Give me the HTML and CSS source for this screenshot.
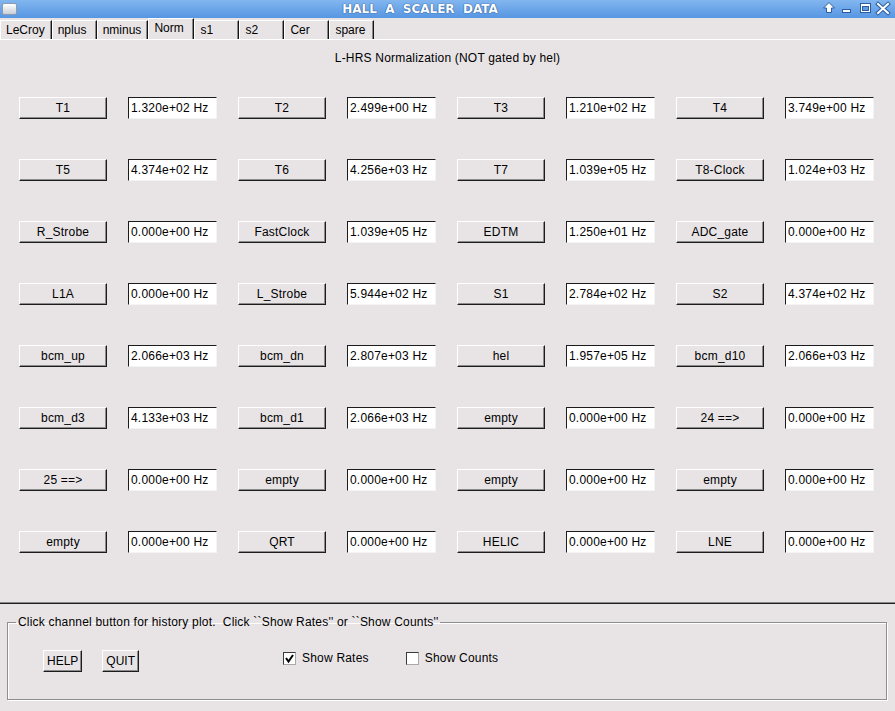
FILE: index.html
```html
<!DOCTYPE html>
<html>
<head>
<meta charset="utf-8">
<title>HALL A SCALER DATA</title>
<link rel="stylesheet" href="styles.css">
</head>
<body>
<div class="titlebar">
  <span class="app-icon"></span>
  <span class="title">HALL  A  SCALER  DATA</span>
  <svg class="wm" width="75" height="18" viewBox="0 0 75 18">
    <polygon points="9,2.5 14.5,8 11.5,8 11.5,12.5 6.5,12.5 6.5,8 3.5,8" fill="#fff" stroke="#2a5d9e" stroke-width="1"/>
    <rect x="22.5" y="9.5" width="8" height="3" fill="#fff" stroke="#2a5d9e" stroke-width="1"/>
    <rect x="40.5" y="3.5" width="10" height="9" fill="#fff" stroke="#2a5d9e" stroke-width="1"/>
    <rect x="42.5" y="6.5" width="6" height="4" fill="#5d9ae2" stroke="#2a5d9e" stroke-width="1"/>
    <path d="M58 4 L68 13 M68 4 L58 13" stroke="#2a5d9e" stroke-width="4" stroke-linecap="square"/>
    <path d="M58 4 L68 13 M68 4 L58 13" stroke="#fff" stroke-width="2" stroke-linecap="square"/>
  </svg>
</div>
<div class="tabs">
  <div class="tab">LeCroy</div>
  <div class="tab">nplus</div>
  <div class="tab">nminus</div>
  <div class="tab active">Norm</div>
  <div class="tab">s1</div>
  <div class="tab">s2</div>
  <div class="tab">Cer</div>
  <div class="tab">spare</div>
</div>
<div class="panel">
  <div class="heading">L-HRS Normalization (NOT gated by hel)</div>
  <div class="grid">
    <button class="chan">T1</button><div class="rate">1.320e+02 Hz</div>
    <button class="chan">T2</button><div class="rate">2.499e+00 Hz</div>
    <button class="chan">T3</button><div class="rate">1.210e+02 Hz</div>
    <button class="chan">T4</button><div class="rate">3.749e+00 Hz</div>

    <button class="chan">T5</button><div class="rate">4.374e+02 Hz</div>
    <button class="chan">T6</button><div class="rate">4.256e+03 Hz</div>
    <button class="chan">T7</button><div class="rate">1.039e+05 Hz</div>
    <button class="chan">T8-Clock</button><div class="rate">1.024e+03 Hz</div>

    <button class="chan">R_Strobe</button><div class="rate">0.000e+00 Hz</div>
    <button class="chan">FastClock</button><div class="rate">1.039e+05 Hz</div>
    <button class="chan">EDTM</button><div class="rate">1.250e+01 Hz</div>
    <button class="chan">ADC_gate</button><div class="rate">0.000e+00 Hz</div>

    <button class="chan">L1A</button><div class="rate">0.000e+00 Hz</div>
    <button class="chan">L_Strobe</button><div class="rate">5.944e+02 Hz</div>
    <button class="chan">S1</button><div class="rate">2.784e+02 Hz</div>
    <button class="chan">S2</button><div class="rate">4.374e+02 Hz</div>

    <button class="chan">bcm_up</button><div class="rate">2.066e+03 Hz</div>
    <button class="chan">bcm_dn</button><div class="rate">2.807e+03 Hz</div>
    <button class="chan">hel</button><div class="rate">1.957e+05 Hz</div>
    <button class="chan">bcm_d10</button><div class="rate">2.066e+03 Hz</div>

    <button class="chan">bcm_d3</button><div class="rate">4.133e+03 Hz</div>
    <button class="chan">bcm_d1</button><div class="rate">2.066e+03 Hz</div>
    <button class="chan">empty</button><div class="rate">0.000e+00 Hz</div>
    <button class="chan">24 ==&gt;</button><div class="rate">0.000e+00 Hz</div>

    <button class="chan">25 ==&gt;</button><div class="rate">0.000e+00 Hz</div>
    <button class="chan">empty</button><div class="rate">0.000e+00 Hz</div>
    <button class="chan">empty</button><div class="rate">0.000e+00 Hz</div>
    <button class="chan">empty</button><div class="rate">0.000e+00 Hz</div>

    <button class="chan">empty</button><div class="rate">0.000e+00 Hz</div>
    <button class="chan">QRT</button><div class="rate">0.000e+00 Hz</div>
    <button class="chan">HELIC</button><div class="rate">0.000e+00 Hz</div>
    <button class="chan">LNE</button><div class="rate">0.000e+00 Hz</div>
  </div>
</div>
<div class="bottom">
  <fieldset class="group">
    <legend>Click channel button for history plot.  Click ``Show Rates'' or ``Show Counts''</legend>
    <div class="controls">
      <button class="btn">HELP</button>
      <button class="btn quit">QUIT</button>
      <label class="check rates"><span class="box"><svg width="11" height="11" viewBox="0 0 11 11"><path d="M2 5 L4.5 8.5 L9 2" fill="none" stroke="#000" stroke-width="2"/></svg></span>Show Rates</label>
      <label class="check counts"><span class="box"></span>Show Counts</label>
    </div>
  </fieldset>
</div>
</body>
</html>
```
FILE: styles.css
```css
html, body {
  margin: 0;
  padding: 0;
}
body {
  width: 895px;
  height: 711px;
  overflow: hidden;
  background: #e8e4e6;
  font-family: "Liberation Sans", Arial, sans-serif;
  font-size: 12px;
  letter-spacing: 0.2px;
  color: #000;
}

/* title bar */
.titlebar {
  display: flex;
  align-items: center;
  height: 18px;
  background: linear-gradient(#82b6ef, #5696e2);
}
.app-icon {
  box-sizing: border-box;
  width: 15px;
  height: 12px;
  margin-left: 2px;
  margin-right: 3px;
  border: 1px solid #8b9cb2;
  border-radius: 2px;
  background: linear-gradient(#ffffff, #c9ced6);
}
.title {
  flex: 1;
  text-align: center;
  white-space: pre;
  font-family: "DejaVu Sans", sans-serif;
  font-weight: bold;
  font-size: 12px;
  letter-spacing: 0;
  line-height: 18px;
  color: #fff;
  text-shadow: 0 0 1px #1d4a88, 0 0 1px #1d4a88;
}
.wm {
  display: block;
}

/* tabs */
.tabs {
  display: flex;
  align-items: flex-end;
  height: 21px;
  letter-spacing: 0;
}
.tab {
  box-sizing: border-box;
  height: 19px;
  min-width: 45px;
  padding: 0 6px 0 5px;
  border-left: 1px solid #fff;
  border-top: 1px solid #fff;
  border-right: 1px solid #151515;
  box-shadow: inset -1px 0 0 #8a8a8a;
  line-height: 18px;
}
.tab.active {
  height: 21px;
  line-height: 19px;
  min-width: 46px;
}

/* main panel */
.panel {
  box-sizing: border-box;
  height: 564px;
  border-top: 1px solid #fff;
  border-bottom: 1px solid #8a8a8a;
}
.heading {
  margin-top: 11px;
  height: 14px;
  line-height: 14px;
  text-align: center;
}
.grid {
  display: grid;
  grid-template-columns: 88px 89px 88px 89px 88px 89px 88px 89px;
  grid-auto-rows: 22px;
  column-gap: 21px;
  row-gap: 40px;
  margin: 32px 0 0 19px;
}
.chan, .btn {
  box-sizing: border-box;
  height: 22px;
  margin: 0;
  padding: 0;
  font: inherit;
  letter-spacing: inherit;
  color: #000;
  background: #e8e4e6;
  border: 1px solid;
  border-color: #fff #1c1c1c #1c1c1c #fff;
  box-shadow: inset -1px -1px 0 #8c8c8c;
  line-height: 20px;
  text-align: center;
}
.rate {
  box-sizing: border-box;
  height: 22px;
  background: #fff;
  border: 1px solid;
  border-color: #1c1c1c #f4f4f4 #f4f4f4 #1c1c1c;
  padding-left: 2px;
  line-height: 20px;
  white-space: nowrap;
}

/* bottom */
.bottom {
  box-sizing: border-box;
  height: 108px;
  border-top: 1px solid #1e1e1e;
  padding: 11px 0 0 7px;
}
.group {
  box-sizing: border-box;
  width: 880px;
  height: 85px;
  margin: 0;
  padding: 0;
  border: 1px solid #8e8e8e;
  box-shadow: inset 1px 1px 0 #fff, 1px 1px 0 #fff;
}
.group legend {
  margin-left: 8px;
  padding: 0 2px;
  line-height: 14px;
  white-space: pre;
}
.controls {
  display: flex;
  align-items: flex-start;
  margin: 21px 0 0 35px;
}
.btn {
  padding: 0 3px;
  letter-spacing: 0;
}
.btn.quit {
  margin-left: 20px;
}
.check {
  display: flex;
  align-items: center;
  gap: 6px;
  margin-top: 2px;
  height: 13px;
  line-height: 13px;
}
.check.rates {
  margin-left: 144px;
}
.check.counts {
  margin-left: 37px;
}
.box {
  box-sizing: border-box;
  width: 13px;
  height: 13px;
  background: #fff;
  border: 1px solid;
  border-color: #3a3a3a #a8a8a8 #a8a8a8 #3a3a3a;
  display: flex;
  align-items: center;
  justify-content: center;
}
.box svg {
  display: block;
}
```
